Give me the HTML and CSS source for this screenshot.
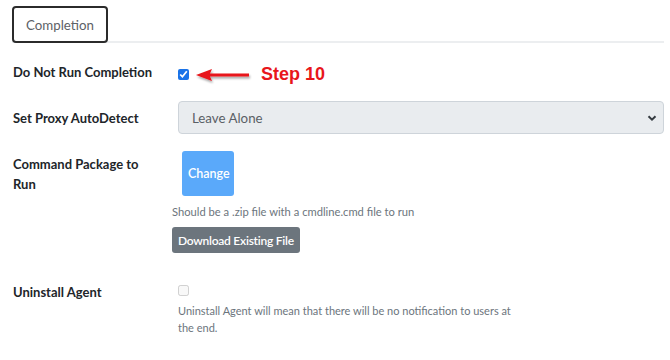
FILE: index.html
```html
<!DOCTYPE html>
<html lang="en">

<head>
    <meta charset="UTF-8">
    <meta name="viewport" content="width=device-width, initial-scale=1.0">
    <title>Completion Settings</title>
    <link rel="stylesheet" href="styles.css">
</head>

<body>
    <!-- Tabs -->
    <div class="tabs">
        <div class="tab active">Completion</div>
    </div>

    <div class="form">
        <!-- Do not run -->
        <div class="row row-check">
            <label class="label">Do Not Run Completion</label>
            <div class="control inline">
                <input type="checkbox" class="check" checked>
                <svg class="arrow" width="58" height="18" viewBox="0 0 58 18">
                    <defs>
                        <filter id="shade" x="-20%" y="-50%" width="140%" height="200%">
                            <feDropShadow dx="1" dy="2" stdDeviation="1" flood-color="#000" flood-opacity="0.35"/>
                        </filter>
                    </defs>
                    <g filter="url(#shade)">
                        <polygon points="1,7 17,1 15,5.5 54,5.5 54,8.5 15,8.5 17,13" fill="#e8161b"/>
                    </g>
                </svg>
                <span class="step">Step 10</span>
            </div>
        </div>

        <!-- Proxy -->
        <div class="row row-select">
            <label class="label">Set Proxy AutoDetect</label>
            <div class="control">
                <div class="select">
                    <span>Leave Alone</span>
                    <svg width="10" height="8" viewBox="0 0 10 8">
                        <path d="M1.5 2.2 L5 5.6 L8.5 2.2" fill="none" stroke="#343a40" stroke-width="2"/>
                    </svg>
                </div>
            </div>
        </div>

        <!-- Package -->
        <div class="row row-package">
            <label class="label">Command Package to<br>Run</label>
            <div class="control">
                <button class="btn btn-change">Change</button>
                <div class="help">Should be a .zip file with a cmdline.cmd file to run</div>
                <button class="btn btn-download">Download Existing File</button>
            </div>
        </div>

        <!-- Uninstall -->
        <div class="row row-uninstall">
            <label class="label">Uninstall Agent</label>
            <div class="control">
                <input type="checkbox" class="check" disabled>
                <div class="help help-wide">Uninstall Agent will mean that there will be no notification to users at the end.</div>
            </div>
        </div>
    </div>
</body>

</html>
```

FILE: styles.css
```css
/* General styles */
body {
    margin: 0;
    padding: 6px 6px 0 12px;
    font-family: Lato, "Open Sans", sans-serif;
    color: #212529;
    background: #fff;
}

/* Tabs */
.tabs {
    display: flex;
    border-bottom: 2px solid #eceef0;
}

.tab {
    width: 92px;
    height: 33px;
    border: 2px solid #2b2b2b;
    border-radius: 4px;
    display: flex;
    align-items: center;
    justify-content: center;
    font-size: 13.3px;
    color: #5d6166;
    margin-bottom: -2px;
    background: #fff;
}

/* Form rows */
.form {
    display: flex;
    flex-direction: column;
}

.row {
    display: grid;
    grid-template-columns: 160px 1fr;
    align-items: start;
}

.label {
    font-weight: 700;
    font-size: 13px;
    line-height: 20px;
    padding-left: 1px;
}

.control {
    display: flex;
    flex-direction: column;
    align-items: flex-start;
}

.control.inline {
    flex-direction: row;
    align-items: center;
}

.row-check {
    margin-top: 19px;
}

.check {
    width: 11px;
    height: 11px;
    margin: 0 0 0 6px;
    accent-color: #1a73e8;
}

.arrow {
    margin-left: 6px;
    margin-top: 6px;
}

.step {
    margin-left: 8px;
    font-family: "Liberation Sans", Arial, sans-serif;
    font-weight: 700;
    font-size: 18px;
    color: #e8161b;
}

/* Select */
.row-select {
    margin-top: 15px;
    align-items: center;
}

.select {
    box-sizing: border-box;
    width: 486px;
    height: 33px;
    margin-left: 6px;
    background: #e9ecef;
    border: 1px solid #ced4da;
    border-radius: 4px;
    display: flex;
    align-items: center;
    justify-content: space-between;
    padding: 0 6px 0 13px;
    font-size: 13.3px;
    color: #5a6066;
}

/* Package */
.row-package {
    margin-top: 17px;
}

.row-package .label {
    padding-top: 3px;
}

.btn {
    border: none;
    color: #fff;
    font-family: inherit;
    border-radius: 3px;
    cursor: pointer;
}

.btn-change {
    margin-left: 10px;
    width: 52px;
    height: 45px;
    background: #5aa9fa;
    font-size: 12.5px;
    font-weight: 600;
}

.help {
    font-size: 11.2px;
    line-height: 17px;
    color: #6c757d;
    margin-top: 7px;
}

.btn-download {
    margin-top: 7px;
    height: 26px;
    padding: 0 6px;
    background: #6c757d;
    font-size: 12px;
    font-weight: 600;
    letter-spacing: -0.25px;
}

/* Uninstall */
.row-uninstall {
    margin-top: 29px;
}

.row-uninstall .check {
    margin-top: 3px;
}

.help-wide {
    font-size: 11px;
    max-width: 336px;
    margin-top: 6px;
    margin-left: 6px;
}
```
